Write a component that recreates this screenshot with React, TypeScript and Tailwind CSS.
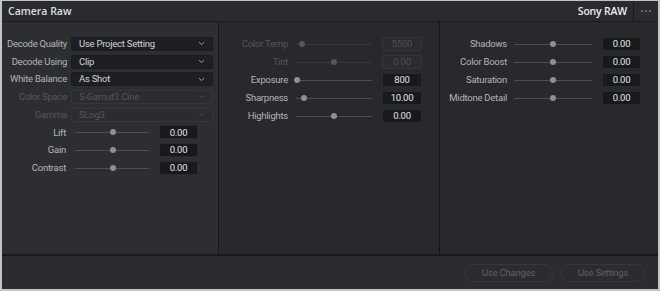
import React from "react";

const font = { fontFamily: '"Open Sans", "Liberation Sans", sans-serif' };
const body = { fontFamily: 'Roboto, "Liberation Sans", sans-serif' };

function Chevron({ dim }: { dim?: boolean }) {
  return (
    <svg width="7" height="5" viewBox="0 0 7 5" className="shrink-0">
      <path d="M1 1.2 L3.5 3.6 L6 1.2" fill="none" stroke={dim ? "#4a4b50" : "#9a9a9e"} strokeWidth="1" />
    </svg>
  );
}

function Dropdown({ label, value, dim }: { label: string; value: string; dim?: boolean }) {
  return (
    <div className="flex h-[17.7px] items-center">
      <div className={`w-[65px] shrink-0 whitespace-nowrap text-right ${dim ? "text-[#55565b]" : "text-[#b4b5b9]"}`}>{label}</div>
      <div
        className={`ml-[4px] flex h-[14px] w-[142px] items-center justify-between rounded-[2px] pl-[7px] pr-[7px] ${
          dim ? "border border-[#35363b] bg-[#2b2c31] text-[#55565b]" : "border border-[#1a1b1e] bg-[#1e1f23] text-[#d2d3d6]"
        }`}
      >
        <span className="whitespace-nowrap">{value}</span>
        <Chevron dim={dim} />
      </div>
    </div>
  );
}

function Slider({ width, pos, dim }: { width: number; pos: number; dim?: boolean }) {
  return (
    <div className="relative h-[14px] shrink-0" style={{ width }}>
      <div className={`absolute left-0 right-0 top-[7px] h-px ${dim ? "bg-[#36373b]" : "bg-[#4d4e53]"}`} />
      <div
        className={`absolute top-[4px] h-[6px] w-[6px] rounded-full ${dim ? "bg-[#55565a]" : "bg-[#8e8f93]"}`}
        style={{ left: pos - 3 }}
      />
    </div>
  );
}

function SliderRow({
  label,
  value,
  pos,
  labelW,
  sliderGap,
  sliderW,
  boxGap,
  boxW,
  dim,
  h,
}: {
  label: string;
  value: string;
  pos: number;
  labelW: number;
  sliderGap: number;
  sliderW: number;
  boxGap: number;
  boxW: number;
  dim?: boolean;
  h: string;
}) {
  return (
    <div className={`flex items-center ${h}`}>
      <div
        className={`shrink-0 whitespace-nowrap text-right ${dim ? "text-[#55565b]" : "text-[#b4b5b9]"}`}
        style={{ width: labelW }}
      >
        {label}
      </div>
      <div style={{ width: sliderGap }} className="shrink-0" />
      <Slider width={sliderW} pos={pos} dim={dim} />
      <div style={{ width: boxGap }} className="shrink-0" />
      <div
        className={`flex h-[14px] shrink-0 items-center justify-center rounded-[2px] ${
          dim ? "border border-[#35363b] bg-[#2b2c31] text-[#4e4f54]" : "border border-[#2a2b2f] bg-[#18191c] text-[#e4e4e6]"
        }`}
        style={{ width: boxW }}
      >
        {value}
      </div>
    </div>
  );
}

export default function App() {
  return (
    <div style={font} className="h-[291px] w-[660px] bg-[#c4c4c6] pl-[2px] pr-[2px] pt-[1px] pb-[2px] leading-none">
      <div className="flex h-full flex-col bg-[#2b2c31]">
        {/* header */}
        <div className="flex h-[21px] shrink-0 items-center border-b border-[#1a1a1d] bg-[#2a2b30]">
          <div className="pl-[6px] text-[10.5px] font-semibold text-[#dcdcdf]">Camera Raw</div>
          <div className="flex-1" />
          <div className="pr-[6px] text-[10.5px] font-semibold tracking-[-0.2px] text-[#ededef]">Sony RAW</div>
          <div className="h-full w-px bg-[#1a1a1d]" />
          <div className="flex w-[24px] items-center justify-center gap-[2px]">
            <span className="h-[2px] w-[2px] rounded-full bg-[#7c7d82]" />
            <span className="h-[2px] w-[2px] rounded-full bg-[#7c7d82]" />
            <span className="h-[2px] w-[2px] rounded-full bg-[#7c7d82]" />
          </div>
        </div>
        {/* columns */}
        <div style={body} className="flex flex-1 border-b-2 border-[#1a1a1d] text-[9.5px] tracking-[-0.25px]">
          <div className="flex w-[217px] shrink-0 flex-col border-r border-[#161619] bg-[#2d2e33] pt-[13px]">
            <Dropdown label="Decode Quality" value="Use Project Setting" />
            <Dropdown label="Decode Using" value="Clip" />
            <Dropdown label="White Balance" value="As Shot" />
            <Dropdown label="Color Space" value="S-Gamut3.Cine" dim />
            <Dropdown label="Gamma" value="SLog3" dim />
            <SliderRow h="h-[17.7px]" label="Lift" value="0.00" pos={38} labelW={64} sliderGap={9} sliderW={74} boxGap={10} boxW={39} />
            <SliderRow h="h-[17.7px]" label="Gain" value="0.00" pos={38} labelW={64} sliderGap={9} sliderW={74} boxGap={10} boxW={39} />
            <SliderRow h="h-[17.7px]" label="Contrast" value="0.00" pos={38} labelW={64} sliderGap={9} sliderW={74} boxGap={10} boxW={39} />
          </div>
          <div className="flex w-[221px] shrink-0 flex-col border-r border-[#161619] bg-[#28282d] pt-[13px]">
            <SliderRow h="h-[18px]" label="Color Temp" value="5500" pos={6} labelW={69} sliderGap={8} sliderW={76} boxGap={10} boxW={40} dim />
            <SliderRow h="h-[18px]" label="Tint" value="0.00" pos={38} labelW={69} sliderGap={8} sliderW={76} boxGap={10} boxW={40} dim />
            <SliderRow h="h-[18px]" label="Exposure" value="800" pos={1} labelW={69} sliderGap={8} sliderW={76} boxGap={10} boxW={40} />
            <SliderRow h="h-[18px]" label="Sharpness" value="10.00" pos={8} labelW={69} sliderGap={8} sliderW={76} boxGap={10} boxW={40} />
            <SliderRow h="h-[18px]" label="Highlights" value="0.00" pos={38} labelW={69} sliderGap={8} sliderW={76} boxGap={10} boxW={40} />
          </div>
          <div className="flex flex-1 flex-col bg-[#28282d] pt-[13px]">
            <SliderRow h="h-[18px]" label="Shadows" value="0.00" pos={39} labelW={67} sliderGap={7} sliderW={78} boxGap={10} boxW={39} />
            <SliderRow h="h-[18px]" label="Color Boost" value="0.00" pos={39} labelW={67} sliderGap={7} sliderW={78} boxGap={10} boxW={39} />
            <SliderRow h="h-[18px]" label="Saturation" value="0.00" pos={39} labelW={67} sliderGap={7} sliderW={78} boxGap={10} boxW={39} />
            <SliderRow h="h-[18px]" label="Midtone Detail" value="0.00" pos={39} labelW={67} sliderGap={7} sliderW={78} boxGap={10} boxW={39} />
          </div>
        </div>
        {/* footer */}
        <div style={body} className="flex h-[33px] shrink-0 items-center justify-end gap-[8px] bg-[#2b2c31] pr-[13px] tracking-[-0.25px]">
          <div className="flex h-[18px] w-[89px] items-center justify-center rounded-full border border-[#37383d] text-[9.5px] text-[#5f6065]">
            Use Changes
          </div>
          <div className="flex h-[18px] w-[84px] items-center justify-center rounded-full border border-[#37383d] text-[9.5px] text-[#5f6065]">
            Use Settings
          </div>
        </div>
      </div>
    </div>
  );
}
